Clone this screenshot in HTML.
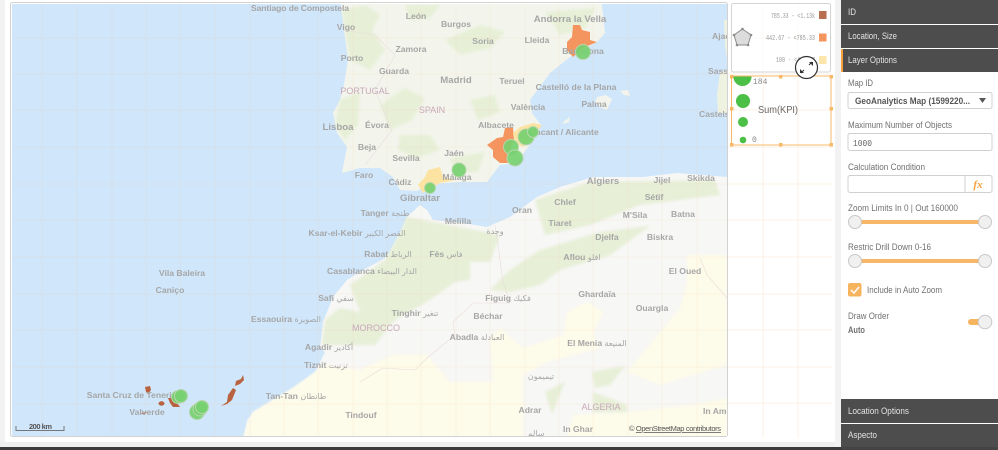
<!DOCTYPE html>
<html><head><meta charset="utf-8"><style>
html,body{margin:0;padding:0;background:#fff;width:998px;height:450px;overflow:hidden}
svg{display:block}
.m text{font-family:"Liberation Sans","DejaVu Sans",sans-serif;font-size:8.6px;font-weight:bold;fill:#a6a6a6;text-anchor:middle}
.m text tspan{font-size:8px;font-weight:normal}
.m text.c{fill:#c9a9bc;font-weight:normal;font-size:9px}
.m text.b{font-size:9.6px}
.m text.s{text-anchor:start}
.p text{font-family:"Liberation Sans","DejaVu Sans",sans-serif;font-size:9.5px;fill:#707070}
.h text{font-family:"Liberation Sans",sans-serif;font-size:9.5px;fill:#e4e4e4}
</style></head><body>
<svg width="998" height="450" viewBox="0 0 998 450" xmlns="http://www.w3.org/2000/svg">
<defs>
<clipPath id="mc"><rect x="12" y="4" width="715" height="432"/></clipPath>
<clipPath id="bc"><rect x="731" y="76" width="100" height="69"/></clipPath>
<filter id="bl" x="-5%" y="-5%" width="110%" height="110%" color-interpolation-filters="sRGB"><feGaussianBlur stdDeviation="1.2"/></filter>
<filter id="tb" color-interpolation-filters="sRGB"><feGaussianBlur stdDeviation="0.25"/></filter>
</defs>
<rect width="998" height="450" fill="#fff"/>
<rect x="0" y="0" width="5" height="446" fill="#f2f2f2"/>
<rect x="0" y="442" width="841" height="5" fill="#efefef"/>
<rect x="835" y="0" width="6" height="447" fill="#f2f2f2"/>
<rect x="0" y="447" width="998" height="3" fill="#3a3a3a"/>
<!-- map -->
<rect x="10.5" y="2.500" width="717" height="434" rx="2" fill="#fff" stroke="#d2d2d2"/>
<g clip-path="url(#mc)">
<rect x="11" y="3" width="717" height="433" fill="#cfe6fb"/>
<!-- Iberia -->
<polygon points="340,0 342,13 345,37 348,60 344,85 340,100 333,113 337,133 347,147 342,173 360,168 380,168 393,177 400,190 417,191 430,184 460,182 487,182 500,165 517,163 533,140 541,125 532,113 530,100 550,73 570,57 597,42 605,33 602,5 600,0" fill="#f3f5ec"/>
<g fill="#e7efd7" filter="url(#bl)">
<polygon points="342,10 365,5 380,15 372,30 385,50 370,70 350,60"/>
<polygon points="340,100 360,92 358,125 345,140 335,125"/>
<polygon points="380,105 405,88 425,98 412,120 390,130"/>
<polygon points="400,135 430,135 440,150 415,158 398,150"/>
<polygon points="445,40 480,25 505,32 490,48 460,55"/>
<polygon points="545,12 595,8 585,28 560,35"/>
<polygon points="470,100 495,95 500,112 478,120"/>
<polygon points="450,158 485,152 478,172 455,173"/>
<polygon points="405,5 440,5 430,18 410,20"/>
</g>
<!-- balearics, corsica/sardinia -->
<polygon points="597,97 606,95 612,99 607,110 600,107 595,102" fill="#f3f5ec"/>
<polygon points="563,122 570,117 569,122 564,124" fill="#f3f5ec"/>
<polygon points="620,91 628,90 630,96 624,95" fill="#f3f5ec"/>
<polygon points="720,72 727,70 727,113 718,113 717,95" fill="#eef2e0"/>
<polygon points="724,20 727,20 727,60 725,45" fill="#eef2e0"/>
<!-- Africa -->
<polygon points="420,205 427,210 433,220 463,223 487,227 510,217 537,197 560,187 593,177 643,177 677,173 728,177 728,440 243,440 247,420 253,412 293,388 315,372 325,352 320,348 323,322 333,297 347,280 363,270 387,257 400,233 407,217" fill="#f7f7f5"/>
<!-- Sahara -->
<g fill="#fdfbe9" filter="url(#bl)">
<polygon points="243,437 253,412 293,388 325,365 360,370 393,355 427,355 450,382 493,382 490,338 500,328 523,348 563,335 567,312 587,302 603,312 593,335 600,348 547,362 523,375 523,437"/>
<polygon points="687,255 727,255 727,365 660,385 627,372 680,308 687,282"/>
<polygon points="567,437 573,415 627,412 693,405 727,398 727,437"/>
</g>
<g fill="#e7efd7" filter="url(#bl)">
<polygon points="407,217 433,222 500,235 490,262 470,262 470,280 455,282 430,300 395,320 375,345 335,345 322,345 325,320 340,308 360,312 350,285 385,260 400,233"/>
<polygon points="490,290 510,270 540,250 600,232 650,226 610,255 560,270 540,285 510,292"/>
<polygon points="535,200 590,182 715,180 720,195 640,205 590,225 545,235"/>
<polygon points="593,392 627,405 627,412 593,412"/>
<polygon points="545,392 565,382 552,414"/>
<polygon points="592,372 625,366 610,385 595,388"/>
</g>
<!-- borders -->
<g fill="none" stroke="#eadcdc" stroke-width=".6">
<polyline points="344,30 375,35 395,55 375,90 392,130 365,165"/>
<polyline points="360,382 383,368 415,370 427,358 455,335 453,322 473,303 510,303 503,282 498,245 495,225"/>
<polyline points="700,258 707,275 727,298"/>
</g>
<!-- grid -->
<g stroke="#f6c9a0" stroke-width=".5" opacity=".3">
<path d="M42 3V436M77 3V436M112 3V436M146 3V436M180 3V436M215 3V436M250 3V436M284 3V436M318 3V436M353 3V436M387 3V436M421 3V436M456 3V436M490 3V436M525 3V436M559 3V436M593 3V436M628 3V436M662 3V436M697 3V436"/>
<path d="M11 38H727M11 74H727M11 110H727M11 147H727M11 184H727M11 220H727M11 257H727M11 294H727M11 330H727M11 367H727M11 404H727"/>
</g>
<!-- regions -->
<polygon points="487,145 497,138 503,137 505,128 513,127 514,140 507,157 508,163 500,163 493,157 493,150" fill="#f4955f"/>
<polygon points="513,133 520,127 533,123 542,125 533,137 523,147 515,143" fill="#fde3a2"/>
<polygon points="573,25 580,25 582,30 590,32 590,40 597,42 583,48 573,57 567,50 567,42 572,37" fill="#f4955f"/>
<polygon points="418,185 425,177 428,170 440,167 443,177 455,180 440,183 423,193" fill="#fde3a2"/>
<g fill="#b9623f">
<polygon points="145,387 150,386 151,390 148,394 146,392"/>
<ellipse cx="161.500" cy="403.500" rx="3" ry="2.200"/>
<polygon points="141,413 147,412 144,415"/>
<polygon points="168,398 173,398 180,407 173,407 170,403"/>
<polygon points="233,388 236,390 232,400 227,404 221,406 227,402 228,395"/>
<polygon points="243,375 244,380 240,384 235,386 236,381 241,379"/>
</g>
<!-- labels -->
<g class="m" filter="url(#tb)">
<text x="300" y="11" textLength="98">Santiago de Compostela</text><text x="346" y="30">Vigo</text><text x="352" y="61">Porto</text>
<text x="338" y="130" class="b">Lisboa</text><text x="377" y="128">Évora</text><text x="367" y="150">Beja</text><text x="364" y="178">Faro</text>
<text x="365" y="94" class="c">PORTUGAL</text><text x="416" y="19">León</text><text x="456" y="27">Burgos</text><text x="483" y="44">Soria</text>
<text x="537" y="43">Lleida</text><text x="570" y="22" class="b">Andorra la Vella</text><text x="411" y="52">Zamora</text><text x="394" y="74">Guarda</text>
<text x="456" y="83" class="b">Madrid</text><text x="512" y="84">Teruel</text><text x="432" y="113" class="c">SPAIN</text><text x="528" y="110">València</text>
<text x="576" y="90">Castelló de la Plana</text><text x="594" y="107">Palma</text><text x="496" y="128">Albacete</text><text x="563" y="135">Alacant / Alicante</text>
<text x="406" y="161">Sevilla</text><text x="454" y="156">Jaén</text><text x="400" y="185">Cádiz</text><text x="457" y="180">Málaga</text><text x="420" y="201" class="b">Gibraltar</text>
<text x="583" y="54">Barcelona</text><text x="603" y="184" class="b">Algiers</text><text x="662" y="183">Jijel</text><text x="701" y="181">Skikda</text><text x="654" y="200">Sétif</text>
<text x="683" y="217">Batna</text><text x="635" y="218">M'Sila</text><text x="565" y="205">Chlef</text><text x="522" y="213">Oran</text><text x="385" y="216">Tanger <tspan>طنجة</tspan></text>
<text x="458" y="224">Melilla</text><text x="560" y="226">Tiaret</text><text x="357" y="236">Ksar-el-Kebir <tspan>القصر الكبير</tspan></text><text x="388" y="257">Rabat <tspan>الرباط</tspan></text>
<text x="446" y="257">Fès <tspan>فاس</tspan></text><text x="372" y="274">Casablanca <tspan>الدار البيضاء</tspan></text><text x="336" y="301">Safi <tspan>سفي</tspan></text><text x="286" y="322">Essaouira <tspan>الصويرة</tspan></text>
<text x="376" y="331" class="c">MOROCCO</text><text x="329" y="350">Agadir <tspan>أكادير</tspan></text><text x="326" y="368">Tiznit <tspan>تزنيت</tspan></text><text x="182" y="276">Vila Baleira</text><text x="170" y="293">Caniço</text>
<text x="133" y="398">Santa Cruz de Tenerife</text><text x="147" y="415">Valverde</text><text x="296" y="399">Tan-Tan <tspan>طانطان</tspan></text><text x="361" y="418">Tindouf</text>
<text x="415" y="316">Tinghir <tspan>تنغير</tspan></text><text x="488" y="319">Béchar</text><text x="508" y="301">Figuig <tspan>فكيك</tspan></text><text x="477" y="340">Abadla <tspan>العبادلة</tspan></text><text x="607" y="240">Djelfa</text>
<text x="660" y="240">Biskra</text><text x="582" y="260">Aflou <tspan>افلو</tspan></text><text x="685" y="274">El Oued</text><text x="597" y="297">Ghardaïa</text><text x="652" y="311">Ouargla</text>
<text x="597" y="346">El Menia <tspan>المنيعة</tspan></text><text x="541" y="379"><tspan>تيميمون</tspan></text><text x="530" y="413">Adrar</text><text x="601" y="410" class="c">ALGERIA</text><text x="578" y="432">In Ghar</text>
<text x="703" y="414" class="s">In Amenas</text><text x="536" y="436"><tspan>سالم</tspan></text><text x="495" y="234"><tspan>وجدة</tspan></text><text x="712" y="39" class="s">Ajaccio</text><text x="708" y="74" class="s">Sassari</text><text x="699" y="117" class="s">Castelsardo</text>
</g>
<!-- bubbles -->
<g fill="#76d06f" fill-opacity=".92" stroke="#b6d6ad" stroke-width="1">
<circle cx="583" cy="52" r="7.500"/><circle cx="459" cy="170" r="7"/><circle cx="430" cy="188" r="5.500"/><circle cx="526" cy="137" r="8"/><circle cx="533" cy="132" r="5.500"/><circle cx="511" cy="147" r="7.500"/><circle cx="515" cy="158" r="8"/>
<circle cx="178" cy="397" r="6.500"/><circle cx="181" cy="396" r="6.500"/><circle cx="197" cy="412" r="7.500"/><circle cx="200" cy="409" r="7"/><circle cx="202" cy="407" r="6.500"/>
</g>
<!-- scale / attribution -->
<path d="M16 426v4.500H64V426" fill="none" stroke="#777" stroke-width="1"/>
<text x="29" y="429" font-family="Liberation Sans" font-size="7.500" font-weight="bold" fill="#555" textLength="23">200 km</text>
<text x="629" y="431" font-family="Liberation Sans" font-size="7.500" fill="#555" textLength="92">© <tspan text-decoration="underline">OpenStreetMap contributors</tspan></text>
</g>
<!-- right grid -->
<g stroke="#f9d3b0" stroke-width=".7" opacity=".45">
<path d="M763 3V438M798 3V438M728 38H832M728 74H832M728 110H832M728 147H832M728 184H832M728 220H832M728 257H832M728 294H832M728 330H832M728 367H832M728 403H832"/>
</g>
<!-- legend -->
<rect x="731.500" y="3.500" width="99" height="68.500" rx="2" fill="#fff" fill-opacity=".7" stroke="#d4d4d4"/>
<polygon points="742.500,29 751,35 748,45 737,45 734,35" fill="#dcdcdc" stroke="#8c8c8c" stroke-width="1"/>
<g fill="#8c8c8c"><circle cx="742.500" cy="29" r="1.300"/><circle cx="751" cy="35" r="1.300"/><circle cx="748" cy="45" r="1.300"/><circle cx="737" cy="45" r="1.300"/><circle cx="734" cy="35" r="1.300"/></g>
<g font-family="Liberation Mono" font-size="7" fill="#999">
<text x="771" y="18" textLength="44" lengthAdjust="spacingAndGlyphs">785.33 - &lt;1.13k</text><text x="766" y="40" textLength="49" lengthAdjust="spacingAndGlyphs">442.67 - &lt;785.33</text><text x="776" y="62" textLength="39" lengthAdjust="spacingAndGlyphs">100 - &lt;442.67</text>
</g>
<rect x="819" y="11" width="7.500" height="8" fill="#b86f50"/><rect x="819" y="33.500" width="7.500" height="8" fill="#f4955f"/><rect x="819" y="56" width="7.500" height="8" fill="#fde6ab"/>
<!-- bubble legend -->
<g clip-path="url(#bc)" fill="#4cc046"><circle cx="742.500" cy="77" r="9"/><circle cx="743" cy="101" r="7"/><circle cx="743" cy="122" r="5"/><circle cx="743" cy="140" r="3.300"/></g>
<text x="753" y="84" font-family="Liberation Mono" font-size="8" fill="#888">184</text>
<text x="752" y="142" font-family="Liberation Mono" font-size="8" fill="#888">0</text>
<text x="758" y="113" font-family="Liberation Sans" font-size="10.500" fill="#666" textLength="40" lengthAdjust="spacingAndGlyphs">Sum(KPI)</text>
<rect x="731.500" y="76" width="99.500" height="69" fill="none" stroke="#f9b868" stroke-width="1"/>
<g fill="#f9b868"><rect x="730" y="75" width="3.500" height="3.500"/><rect x="779" y="75" width="3.500" height="3.500"/><rect x="829.500" y="75" width="3.500" height="3.500"/><rect x="730" y="107" width="3.500" height="3.500"/><rect x="829.500" y="107" width="3.500" height="3.500"/><rect x="730" y="143" width="3.500" height="3.500"/><rect x="779" y="143" width="3.500" height="3.500"/><rect x="829.500" y="143" width="3.500" height="3.500"/></g>
<!-- expand icon -->
<circle cx="806.500" cy="67.500" r="11" fill="#fff" stroke="#333" stroke-width="1.200"/>
<path d="M809 65l3-3M804 70l-3 3" stroke="#333" stroke-width="1"/><path d="M809 62h4v4zM804 73h-4v-4z" fill="#333"/>
<!-- side panel -->
<rect x="841" y="0" width="157" height="450" fill="#fff"/>
<g fill="#4d4d4d"><rect x="841" y="0" width="157" height="24"/><rect x="841" y="25" width="157" height="23"/><rect x="841" y="49" width="157" height="23"/><rect x="841" y="399" width="157" height="24"/><rect x="841" y="424" width="157" height="23"/></g>
<rect x="841" y="447" width="157" height="3" fill="#444"/>
<rect x="841" y="49" width="2" height="23" fill="#f6a13d"/>
<g class="h"><text x="848" y="15" textLength="8" lengthAdjust="spacingAndGlyphs">ID</text><text x="848" y="39" textLength="49" lengthAdjust="spacingAndGlyphs">Location, Size</text><text x="848" y="63" textLength="49" lengthAdjust="spacingAndGlyphs">Layer Options</text><text x="848" y="414" textLength="61" lengthAdjust="spacingAndGlyphs">Location Options</text><text x="848" y="438" textLength="29" lengthAdjust="spacingAndGlyphs">Aspecto</text></g>
<g class="p">
<text x="848" y="86" textLength="25" lengthAdjust="spacingAndGlyphs">Map ID</text><text x="848" y="128" textLength="104" lengthAdjust="spacingAndGlyphs">Maximum Number of Objects</text><text x="848" y="170" textLength="77" lengthAdjust="spacingAndGlyphs">Calculation Condition</text>
<text x="848" y="211" textLength="110" lengthAdjust="spacingAndGlyphs">Zoom Limits In 0 | Out 160000</text><text x="848" y="250" textLength="83" lengthAdjust="spacingAndGlyphs">Restric Drill Down 0-16</text><text x="867" y="293" textLength="75" lengthAdjust="spacingAndGlyphs">Include in Auto Zoom</text><text x="848" y="319" textLength="41" lengthAdjust="spacingAndGlyphs">Draw Order</text>
<text x="848" y="333" font-weight="bold" fill="#444" textLength="17" lengthAdjust="spacingAndGlyphs">Auto</text>
</g>
<rect x="848" y="92.500" width="144" height="16" rx="2" fill="#fff" stroke="#d0d0d0"/>
<text x="855" y="104" font-family="Liberation Sans" font-size="9.500" font-weight="bold" fill="#555" textLength="115" lengthAdjust="spacingAndGlyphs">GeoAnalytics Map (1599220...</text>
<polygon points="979,98 986,98 982.500,103" fill="#555"/>
<rect x="848" y="133.500" width="144" height="17" rx="2" fill="#fff" stroke="#d0d0d0"/>
<text x="853" y="146" font-family="Liberation Mono" font-size="9" fill="#666" textLength="19" lengthAdjust="spacingAndGlyphs">1000</text>
<rect x="848" y="175.500" width="144" height="17" rx="2" fill="#fff" stroke="#d0d0d0"/>
<path d="M965 175.500v17" stroke="#d0d0d0"/>
<text x="978" y="188" font-family="Liberation Serif" font-size="11" font-weight="bold" font-style="italic" fill="#f6a13d" text-anchor="middle">fx</text>
<rect x="855" y="220" width="130" height="4" fill="#f7b768"/>
<rect x="855" y="259" width="130" height="4" fill="#f7b768"/>
<g fill="#f0f0f0" stroke="#c8c8c8"><circle cx="855" cy="222" r="6.500"/><circle cx="985" cy="222" r="6.500"/><circle cx="855" cy="261" r="6.500"/><circle cx="985" cy="261" r="6.500"/></g>
<rect x="848" y="283" width="13.500" height="13.500" rx="2" fill="#f7b45f"/>
<path d="M851 290l3 3 5-6" fill="none" stroke="#fff" stroke-width="1.500"/>
<rect x="968" y="319" width="16" height="6" rx="3" fill="#f7b45f"/>
<circle cx="985" cy="322" r="6.800" fill="#f0f0f0" stroke="#c8c8c8"/>
</svg>
</body></html>
